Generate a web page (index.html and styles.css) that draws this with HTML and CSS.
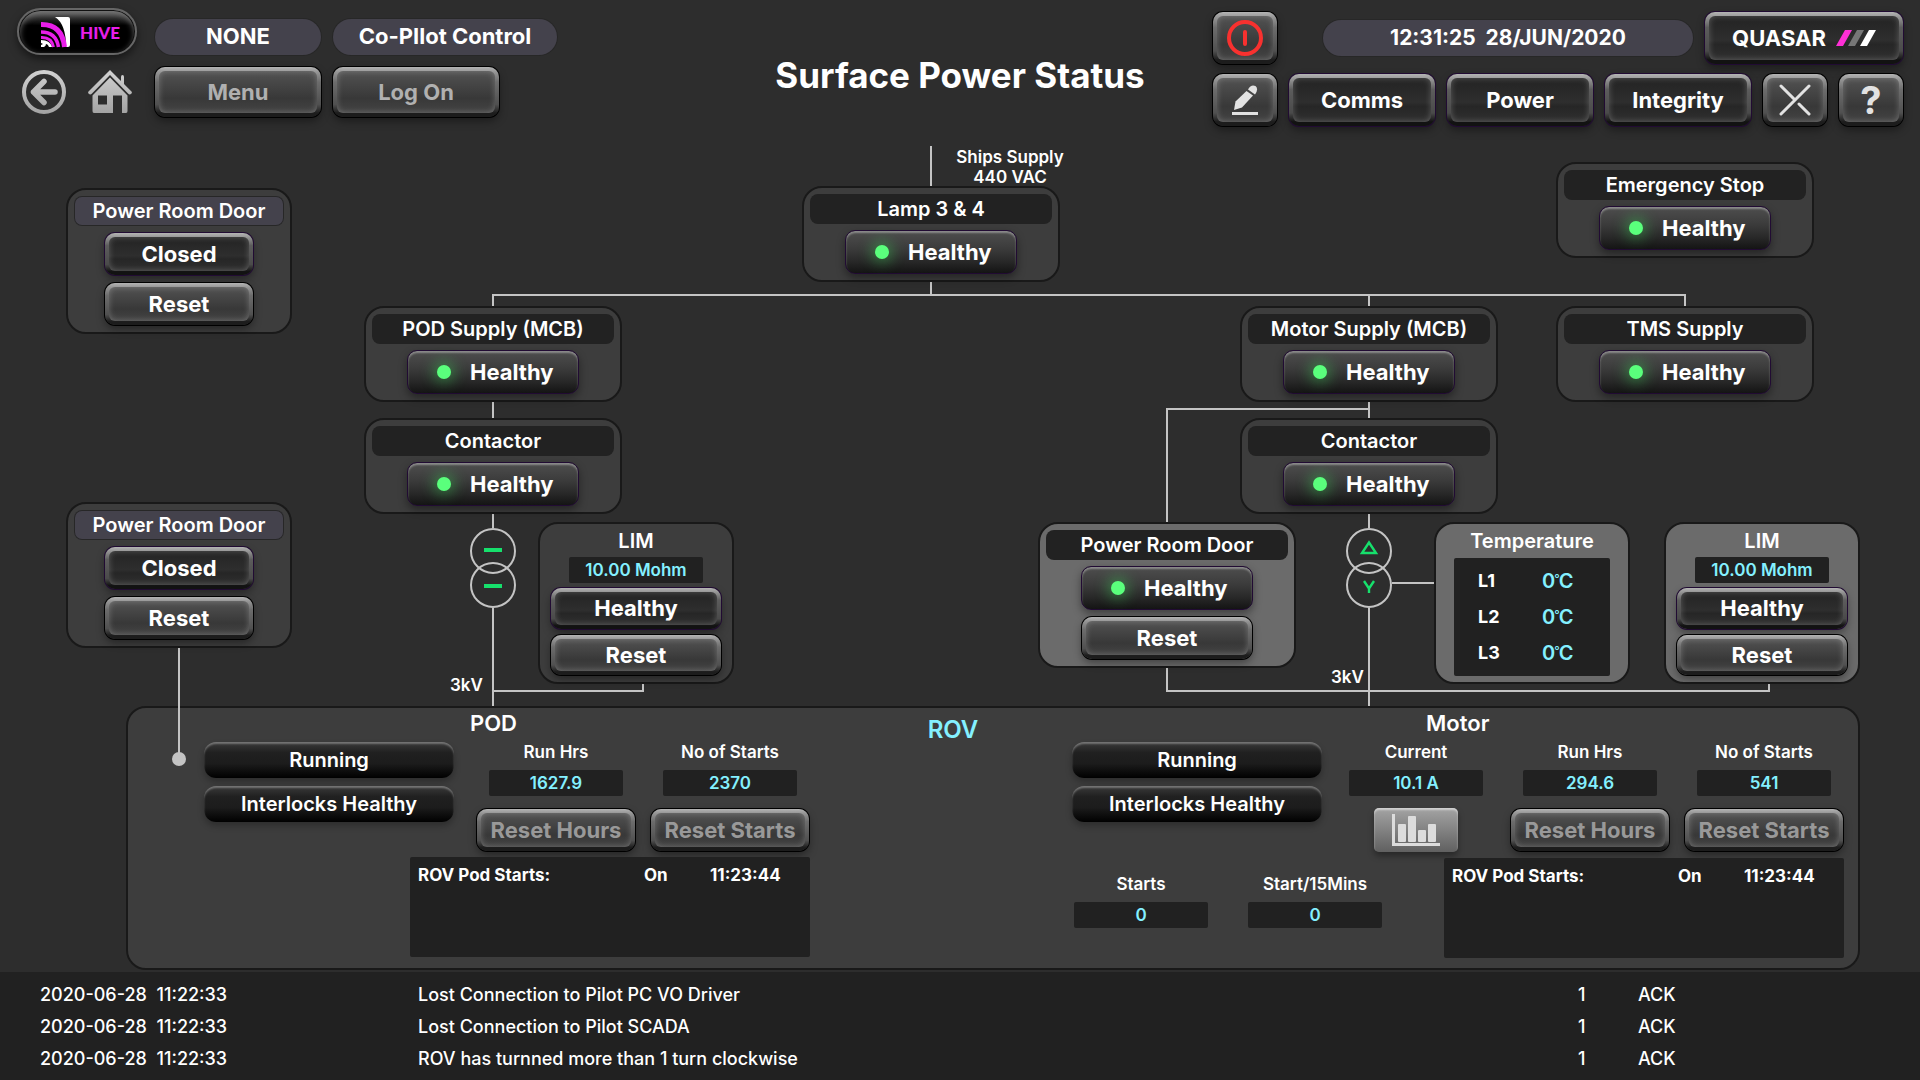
FILE: index.html
```html
<!DOCTYPE html>
<html lang="en">
<head>
<meta charset="utf-8">
<meta name="viewport" content="width=device-width, initial-scale=1">
<title>Surface Power Status</title>
<link rel="stylesheet" href="styles.css">
</head>
<body>
<header class="topbar">
  <div class="topbar-left">
    <a class="brand" href="#">
      <svg width="30" height="31" viewBox="0 0 30 31" aria-hidden="true">
        <path d="M14 0H27Q29 0 29 2V28Q29 30 27 30H25Q25 7 14 0Z" fill="#fff"/>
        <g fill="none" stroke="#e81ee8">
          <path d="M0 7.500Q21 7 23.500 30" stroke-width="5"/>
          <path d="M0 15Q15 15 17.500 30" stroke-width="3.500"/>
          <path d="M0 20.500Q10.500 20 12.500 30" stroke-width="3"/>
        </g>
        <path d="M0 23Q9 23 11 30H8Q7 27 5 27Q5 29 3 30H0V28L2 27L0 26Z" fill="#fff"/>
      </svg>
      <span>HIVE</span>
    </a>
    <div class="pill">NONE</div>
    <div class="pill pill-wide">Co-PIlot Control</div>
    <nav class="nav-icons">
      <a href="#" aria-label="Back">
        <svg width="44" height="44" viewBox="0 0 44 44">
          <defs><linearGradient id="metal" x1="0" y1="0" x2="0" y2="44" gradientUnits="userSpaceOnUse"><stop offset="0" stop-color="#d2d2d2"/><stop offset="1" stop-color="#a2a2a2"/></linearGradient></defs>
          <circle cx="22" cy="22" r="20" fill="none" stroke="url(#metal)" stroke-width="4"/>
          <path d="M22 11.500L11.500 22L22 32.500M11.500 22.001H33" fill="none" stroke="url(#metal)" stroke-width="5.500" stroke-linecap="round" stroke-linejoin="round"/>
        </svg>
      </a>
      <a href="#" aria-label="Home">
        <svg width="44" height="44" viewBox="0 0 44 44">
          <path d="M22 0L33 11V7Q33 5 34.500 5Q36 5 36 7V14L43.500 21.500Q44.500 23 43 24Q41.500 25 40 23.500L22 5L4 23.500Q2.500 25 1 24Q-.5 23 .5 21.500Z" fill="url(#metal)"/>
          <path fill-rule="evenodd" d="M22 7.500L39.500 25.500V41Q39.500 43 38 43H34V25.500H25V43H6Q4.500 43 4.500 41V25.500ZM10 25.500V34.500H19V25.500Z" fill="url(#metal)"/>
        </svg>
      </a>
    </nav>
    <button class="key" type="button" disabled>Menu</button>
    <button class="key key-menu" type="button" disabled>Log On</button>
  </div>

  <h1>Surface Power Status</h1>

  <div class="topbar-right">
    <div class="tool-row">
      <button class="key key-square" type="button" aria-label="Power off">
        <svg width="36" height="36" viewBox="0 0 36 36"><circle cx="18" cy="18" r="16" fill="none" stroke="#f8312f" stroke-width="4"/><path d="M18 12V24" stroke="#f8312f" stroke-width="4" stroke-linecap="round"/></svg>
      </button>
      <time class="pill pill-clock" datetime="2020-06-28T12:31:25">12:31:25&nbsp; 28/JUN/2020</time>
      <button class="key key-dark key-system" type="button">QUASAR
        <svg width="40" height="16" viewBox="0 0 40 16" aria-hidden="true"><path d="M9 0H16L7 16H0Z" fill="#ff2fd6"/><path d="M21 0H28L19 16H12Z" fill="#777"/><path d="M33 0H40L31 16H24Z" fill="#fff"/></svg>
      </button>
    </div>
    <div class="tool-row">
      <button class="key key-square" type="button" aria-label="Edit">
        <svg width="28" height="30" viewBox="0 0 28 30" fill="#e2e2e2"><path d="M1 27H27V30H1Z"/><path d="M15.500 6L22 10.500L11 22.500L3 25L4.500 16.500Z"/><path d="M17 4.500Q20 -1 24.500 1Q28 4 24 9.500Z"/></svg>
      </button>
      <button class="key key-dark key-page" type="button">Comms</button>
      <button class="key key-dark key-page" type="button">Power</button>
      <button class="key key-dark key-page" type="button">Integrity</button>
      <button class="key key-square" type="button" aria-label="Close">
        <svg width="32" height="32" viewBox="0 0 32 32" fill="none" stroke="#e2e2e2" stroke-width="3" stroke-linecap="round"><path d="M2 2L16 16L2 30M16 16L30 2M20 20L30 30"/></svg>
      </button>
      <button class="key key-square key-help" type="button" aria-label="Help">?</button>
    </div>
  </div>
</header>

<main>
  <section class="diagram" aria-label="Supply diagram">
    <svg class="wiring" width="1920" height="650" viewBox="0 126 1920 650" aria-hidden="true">
      <g fill="none" stroke="#c4c4c4" stroke-width="2">
        <path d="M931 146V186M931 282V295M493 306V295H1685V306M1369 295V306"/>
        <path d="M493 402V418M493 514V528M493 608V706M493 691H643V684"/>
        <path d="M1369 402V418M1369 514V528M1369 608V706M1369 409H1167V522M1167 668V691H1769V684M1392 583H1434"/>
        <path d="M179 648V756"/>
        <circle cx="493" cy="551" r="22"/><circle cx="493" cy="585" r="22"/>
        <circle cx="1369" cy="551" r="22"/><circle cx="1369" cy="585" r="22"/>
      </g>
      <circle cx="179" cy="759" r="7" fill="#c4c4c4"/>
      <path d="M484 548H502V552H484ZM484 584H502V588H484Z" fill="#16e06c"/>
      <path d="M1369 542.500L1376 553H1362ZM1364 581L1369 588.500L1374 581M1369 588V593" fill="none" stroke="#16e06c" stroke-width="2.400"/>
    </svg>

    <p class="note note-ships">Ships Supply<br>440 VAC</p>
    <p class="note note-pod">3kV</p>
    <p class="note note-motor">3kV</p>

    <article class="node door door-upper">
      <h2 class="node-title">Power Room Door</h2>
      <button class="key key-dark" type="button">Closed</button>
      <button class="key" type="button">Reset</button>
    </article>
    <article class="node door door-lower">
      <h2 class="node-title">Power Room Door</h2>
      <button class="key key-dark" type="button">Closed</button>
      <button class="key" type="button">Reset</button>
    </article>
    <article class="node lamp">
      <h2 class="node-title">Lamp 3 &amp; 4</h2>
      <div class="state">Healthy</div>
    </article>
    <article class="node emergency">
      <h2 class="node-title">Emergency Stop</h2>
      <div class="state">Healthy</div>
    </article>
    <article class="node pod-supply">
      <h2 class="node-title">POD Supply (MCB)</h2>
      <div class="state">Healthy</div>
    </article>
    <article class="node motor-supply">
      <h2 class="node-title">Motor Supply (MCB)</h2>
      <div class="state">Healthy</div>
    </article>
    <article class="node tms-supply">
      <h2 class="node-title">TMS Supply</h2>
      <div class="state">Healthy</div>
    </article>
    <article class="node pod-contactor">
      <h2 class="node-title">Contactor</h2>
      <div class="state">Healthy</div>
    </article>
    <article class="node motor-contactor">
      <h2 class="node-title">Contactor</h2>
      <div class="state">Healthy</div>
    </article>
    <article class="node node-light motor-door">
      <h2 class="node-title">Power Room Door</h2>
      <div class="state">Healthy</div>
      <button class="key" type="button">Reset</button>
    </article>
    <article class="node meter pod-lim">
      <h2 class="meter-title">LIM</h2>
      <output class="readout">10.00 Mohm</output>
      <button class="key key-dark" type="button">Healthy</button>
      <button class="key" type="button">Reset</button>
    </article>
    <article class="node meter node-light temperature">
      <h2 class="meter-title">Temperature</h2>
      <table class="temps">
        <tr><th scope="row">L1</th><td>0<sup>°</sup>C</td></tr>
        <tr><th scope="row">L2</th><td>0<sup>°</sup>C</td></tr>
        <tr><th scope="row">L3</th><td>0<sup>°</sup>C</td></tr>
      </table>
    </article>
    <article class="node meter node-light motor-lim">
      <h2 class="meter-title">LIM</h2>
      <output class="readout">10.00 Mohm</output>
      <button class="key key-dark" type="button">Healthy</button>
      <button class="key" type="button">Reset</button>
    </article>
  </section>

  <section class="rov">
    <section class="unit unit-pod">
      <h3>POD</h3>
      <div class="flags"><div class="flag">Running</div><div class="flag">Interlocks Healthy</div></div>
      <div class="counter"><span class="label">Run Hrs</span><output class="readout">1627.9</output><button class="key" type="button" disabled>Reset Hours</button></div>
      <div class="counter"><span class="label">No of Starts</span><output class="readout">2370</output><button class="key" type="button" disabled>Reset Starts</button></div>
      <div class="events"><table><tr><td>ROV Pod Starts:</td><td>On</td><td>11:23:44</td></tr></table></div>
    </section>

    <h2 class="rov-title">ROV</h2>

    <section class="unit unit-motor">
      <h3>Motor</h3>
      <div class="flags"><div class="flag">Running</div><div class="flag">Interlocks Healthy</div></div>
      <div class="counter"><span class="label">Current</span><output class="readout">10.1 A</output>
        <button class="chart" type="button" aria-label="Current chart">
          <svg width="50" height="32" viewBox="0 0 50 32" fill="#dcdcdc"><path d="M1 0H4V29H49V32H1Z"/><rect x="7" y="10" width="8" height="18" rx="1"/><rect x="17" y="2" width="8" height="26" rx="1"/><rect x="27" y="16" width="8" height="12" rx="1"/><rect x="37" y="10" width="8" height="18" rx="1"/></svg>
        </button>
      </div>
      <div class="counter"><span class="label">Run Hrs</span><output class="readout">294.6</output><button class="key" type="button" disabled>Reset Hours</button></div>
      <div class="counter"><span class="label">No of Starts</span><output class="readout">541</output><button class="key" type="button" disabled>Reset Starts</button></div>
      <div class="tallies">
        <div class="counter"><span class="label">Starts</span><output class="readout">0</output></div>
        <div class="counter"><span class="label">Start/15Mins</span><output class="readout">0</output></div>
      </div>
      <div class="events"><table><tr><td>ROV Pod Starts:</td><td>On</td><td>11:23:44</td></tr></table></div>
    </section>
  </section>
</main>

<footer class="log">
  <table>
    <tr><td>2020-06-28&nbsp; 11:22:33</td><td>Lost Connection to Pilot PC VO Driver</td><td>1</td><td>ACK</td></tr>
    <tr><td>2020-06-28&nbsp; 11:22:33</td><td>Lost Connection to Pilot SCADA</td><td>1</td><td>ACK</td></tr>
    <tr><td>2020-06-28&nbsp; 11:22:33</td><td>ROV has turnned more than 1 turn clockwise</td><td>1</td><td>ACK</td></tr>
  </table>
</footer>
</body>
</html>
```
FILE: styles.css
```css
* { box-sizing: border-box; }

body {
  margin: 0;
  min-height: 100vh;
  display: flex;
  flex-direction: column;
  background: #2d2d2d;
  color: #fff;
  font-family: Inter, "Liberation Sans", sans-serif;
  font-size: 18px;
  font-weight: 600;
}

h1, h2, h3, p { margin: 0; font-weight: 600; }
table { border-collapse: collapse; }
th, td { padding: 0; text-align: left; }

/* Raised push button */
.key {
  display: flex;
  align-items: center;
  justify-content: center;
  height: 44px;
  padding: 0;
  border: 4px solid transparent;
  border-radius: 10px;
  background:
    linear-gradient(#525252, #383838 65%, #444) padding-box,
    linear-gradient(#b4b4b4, #969696 10%, #6c6c6c 30%, #505050 75%, #1c1c1c 92%) border-box;
  box-shadow: inset 0 0 6px rgba(255, 255, 255, .25), 0 0 0 1px #000, 0 4px 8px rgba(0, 0, 0, .4);
  color: #fff;
  font: 700 22px/24px Inter, "Liberation Sans", sans-serif;
}
.key-dark {
  background:
    linear-gradient(#232323, #2e2e2e 55%, #262626 65%, #303030) padding-box,
    linear-gradient(#b4b4b4, #969696 10%, #5c5c5c 30%, #4a4a4a 75%, #121212 92%) border-box;
  box-shadow: inset 0 0 6px rgba(255, 255, 255, .25), 0 0 0 1px #210b33, 0 4px 8px rgba(0, 0, 0, .4);
}
.key:disabled { color: #999; }

.pill {
  display: flex;
  align-items: center;
  justify-content: center;
  height: 36px;
  padding-bottom: 2px;
  border-radius: 18px;
  background: #44424c;
  box-shadow: 0 0 0 1px #272727;
  font-size: 22px;
  font-weight: 700;
}

/* Header */
.topbar {
  display: grid;
  grid-template-columns: 1fr auto 1fr;
  height: 126px;
  padding: 0 17px;
}
.topbar h1 { align-self: center; margin-top: 24px; font-size: 35px; font-weight: 700; line-height: 40px; }
.topbar-left {
  display: grid;
  grid-template: 47px 50px / 126px 166px auto;
  gap: 12px;
  padding-top: 8px;
  justify-content: start;
}
.topbar-left .pill { align-self: end; }
.topbar-left .key { height: 50px; }
.topbar-left .key:disabled { color: #b0b0b0; }
.key-menu { width: 166px; }
.pill-wide { width: 224px; }
.brand {
  display: flex;
  align-items: center;
  gap: 9px;
  width: 120px;
  padding: 2px 0 0 22px;
  border: 2px solid #666;
  border-radius: 24px;
  background: linear-gradient(#6a6a6a, #2a2a2a 20%, #000 36%);
  box-shadow: inset 0 0 0 1px #111, inset 0 3px 6px #777, 0 4px 8px rgba(0, 0, 0, .5);
  color: #e81ee8;
  font: 900 17px/20px Lato, sans-serif;
  text-decoration: none;
}
.nav-icons { display: flex; gap: 22px; padding: 3px 0 0 5px; }
.nav-icons a { display: flex; }
.topbar-right { display: grid; gap: 10px; align-content: start; justify-content: end; padding-top: 12px; }
.tool-row { display: flex; gap: 12px; }
.tool-row .key { height: 52px; }
.tool-row .pill { align-self: center; margin-left: auto; }
.key-square { width: 64px; }
.key-page { width: 146px; }
.key-system { width: 198px; gap: 10px; }
.key-help { font-size: 38px; color: #e2e2e2; }
.pill-clock { width: 370px; font-size: 21px; }

/* Diagram: nodes placed about the centre line of the canvas */
main { flex: 1; }
.diagram { position: relative; height: 580px; }
.wiring { position: absolute; top: 0; left: calc(50% - 960px); pointer-events: none; }
.note { position: absolute; font-size: 17px; line-height: 20px; text-align: center; }
.note-ships { left: calc(50% - 10px); width: 120px; top: 21px; }
.note-pod { left: calc(50% - 510px); top: 549px; }
.note-motor { left: calc(50% + 371px); top: 541px; }

.node {
  position: absolute;
  display: flex;
  flex-direction: column;
  align-items: center;
  gap: 6px;
  width: 258px;
  padding: 6px;
  border: 2px solid #191919;
  border-radius: 20px;
  background: #3d3d3d;
}
.node-light { background: #6b6b6b; }
.node .key { width: 170px; height: 42px; margin: 1px; }
.node-title {
  align-self: stretch;
  border-radius: 8px;
  background: #222;
  font-size: 20px;
  line-height: 30px;
  text-align: center;
}
.state {
  display: flex;
  align-items: center;
  gap: 19px;
  width: 172px;
  height: 44px;
  padding-left: 29px;
  border: 1px solid #210b33;
  border-radius: 10px;
  background: linear-gradient(#4e4e4e, #3c3c3c 40%, #2a2a2a 70%, #141414);
  box-shadow: inset 0 2px 2px rgba(255, 255, 255, .35), 0 4px 8px rgba(0, 0, 0, .4);
  font-size: 22px;
  font-weight: 700;
}
.state::before {
  content: "";
  width: 14px;
  height: 14px;
  border-radius: 50%;
  background: #5aff7c;
  box-shadow: 0 0 14px 4px rgba(60, 220, 90, .4);
}
.readout {
  display: block;
  width: 134px;
  border-radius: 2px;
  background: #212121;
  color: #84f0ff;
  font-size: 17px;
  line-height: 26px;
  text-align: center;
}

.door { left: calc(50% - 894px); width: 226px; }
.door .node-title { background: #44424c; box-shadow: inset 0 0 0 1px #272727; }
.door .key { width: 148px; }
.door-upper { top: 62px; }
.door-lower { top: 376px; }
.lamp { left: calc(50% - 158px); top: 60px; }
.emergency { left: calc(50% + 596px); top: 36px; }
.pod-supply { left: calc(50% - 596px); top: 180px; }
.pod-contactor { left: calc(50% - 596px); top: 292px; }
.motor-supply { left: calc(50% + 280px); top: 180px; }
.motor-contactor { left: calc(50% + 280px); top: 292px; }
.tms-supply { left: calc(50% + 596px); top: 180px; }
.motor-door { left: calc(50% + 78px); top: 396px; }

.meter { width: 196px; height: 162px; gap: 4px; top: 396px; padding-top: 5px; }
.meter-title { font-size: 20px; line-height: 24px; }
.pod-lim { left: calc(50% - 422px); }
.temperature { left: calc(50% + 474px); }
.motor-lim { left: calc(50% + 704px); }
.temps { width: 156px; height: 118px; margin-top: 1px; border-radius: 2px; background: #212121; display: grid; align-content: center; }
.temps tbody { display: grid; }
.temps tr { display: grid; grid-template-columns: 64px auto; padding-left: 24px; line-height: 36px; }
.temps td { color: #84f0ff; font-size: 20px; }
.temps sup { margin: 0 -1px; font-size: 12px; font-weight: 500; line-height: 0; vertical-align: 5px; }

/* ROV panel */
.rov {
  display: flex;
  justify-content: space-between;
  margin: 0 60px 2px 126px;
  padding: 2px 14px 10px 76px;
  border: 2px solid #191919;
  border-radius: 20px;
  background: #3d3d3d;
}
.rov-title { margin-left: 24px; color: #84f0ff; font-size: 24px; line-height: 40px; }
.unit { display: grid; column-gap: 14px; row-gap: 6px; align-content: start; }
.unit-pod { grid-template-columns: 258px 160px 160px; }
.unit-motor { grid-template-columns: 250px repeat(3, 160px); }
.unit h3 { grid-column: 1 / -1; font-size: 22px; line-height: 26px; }
.unit-pod h3 { padding-left: 266px; }
.unit-motor h3 { padding-left: 354px; }
.flags { display: grid; gap: 8px; align-content: start; width: 250px; }
.flag {
  height: 36px;
  border-radius: 12px;
  background: linear-gradient(#3a3a3a, #202020 30%, #1c1c1c 60%, #000);
  box-shadow: inset 0 2px 2px rgba(255, 255, 255, .3), 0 4px 6px rgba(0, 0, 0, .25);
  font-size: 20px;
  line-height: 36px;
  text-align: center;
}
.counter { display: flex; flex-direction: column; align-items: center; }
.label { margin-bottom: 8px; font-size: 17px; line-height: 20px; }
.counter .key { width: 158px; height: 42px; margin-top: 13px; }
.chart {
  display: flex;
  align-items: center;
  justify-content: center;
  width: 84px;
  height: 44px;
  margin-top: 12px;
  padding: 0;
  border: 0;
  border-radius: 5px;
  background: linear-gradient(#a4a4a4, #606060);
  box-shadow: inset 0 2px 2px rgba(255, 255, 255, .5), 0 4px 6px rgba(0, 0, 0, .35);
}
.events { height: 100px; padding: 6px 8px; border-radius: 2px; background: #212121; font-size: 17px; font-weight: 700; line-height: 24px; }
.events table { width: 100%; }
.events td:nth-child(1) { width: 226px; }
.events td:nth-child(2) { width: 66px; }
.unit-pod .events { grid-column: 1 / -1; justify-self: end; width: 400px; }
.unit-motor .events { grid-column: 1 / -1; grid-row: 3; justify-self: end; width: 400px; }
.tallies { grid-column: 1 / -1; grid-row: 3; justify-self: start; display: flex; gap: 40px; padding: 16px 0 0 2px; }

/* Event log */
.log { padding: 7px 40px 5px; background: #212121; font-weight: 500; }
.log table { width: 100%; }
.log td { line-height: 32px; }
.log td:nth-child(1) { width: 378px; }
.log td:nth-child(3) { width: 60px; }
.log td:nth-child(4) { width: 242px; }
```
